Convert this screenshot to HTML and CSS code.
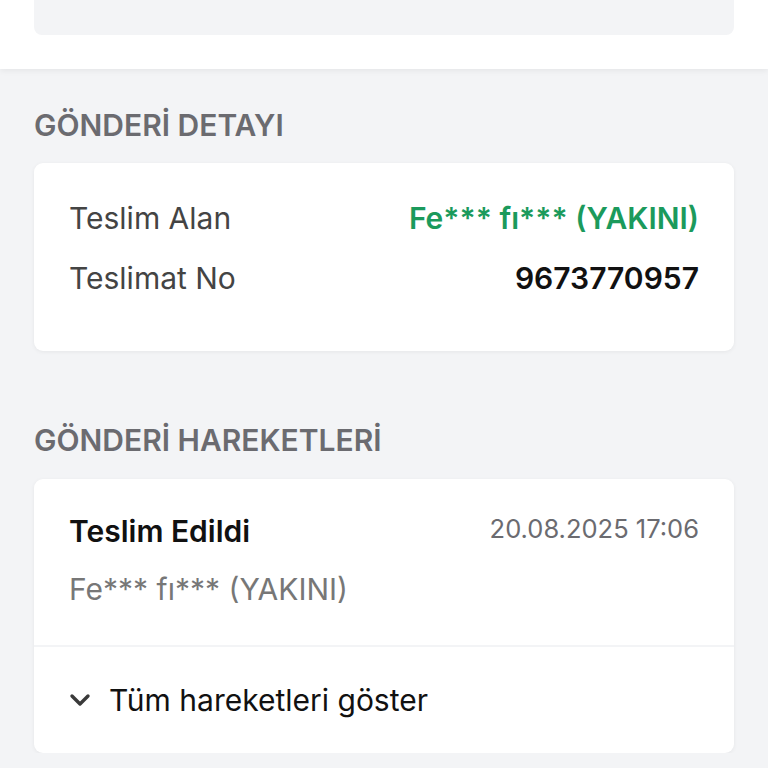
FILE: index.html
```html
<!DOCTYPE html>
<html lang="tr">
<head>
  <meta charset="UTF-8">
  <meta name="viewport" content="width=device-width, initial-scale=1.0">
  <title>Gönderi Takip</title>
  <link rel="stylesheet" href="styles.css">
</head>
<body>
  <div class="ust">
    <div class="ust-kutu"></div>
  </div>

  <h2 class="baslik baslik-detay">GÖNDERİ DETAYI</h2>
  <div class="kart detay">
    <div class="satir">
      <span class="etiket">Teslim Alan</span>
      <span class="deger yesil">Fe*** fı*** (YAKINI)</span>
    </div>
    <div class="satir">
      <span class="etiket">Teslimat No</span>
      <span class="deger">9673770957</span>
    </div>
  </div>

  <h2 class="baslik baslik-hareket">GÖNDERİ HAREKETLERİ</h2>
  <div class="kart hareket">
    <div class="hareket-ust">
      <div class="satir">
        <span class="durum">Teslim Edildi</span>
        <span class="tarih">20.08.2025 17:06</span>
      </div>
      <div class="alici">Fe*** fı*** (YAKINI)</div>
    </div>
    <div class="hareket-alt">
      <svg class="ok" width="22" height="14" viewBox="0 0 22 14">
        <path d="M3 3 L11 11 L19 3" fill="none" stroke="#3a3a3a" stroke-width="3.4" stroke-linecap="round" stroke-linejoin="round"/>
      </svg>
      <span>Tüm hareketleri göster</span>
    </div>
  </div>
</body>
</html>
```

FILE: styles.css
```css
body {
  margin: 0;
  background-color: #f3f4f6;
  font-family: Inter, "Noto Sans", sans-serif;
  color: #111;
}
.ust {
  background-color: white;
  height: 69px;
  padding: 0 34px;
  box-shadow: 0 2px 6px rgba(0,0,0,0.06);
}
.ust-kutu {
  height: 35px;
  background-color: #f3f4f6;
  border-radius: 0 0 8px 8px;
}
.baslik {
  margin: 0 34px;
  font-size: 30px;
  font-weight: 600;
  color: #6b6b70;
  line-height: 36px;
}
.baslik-detay {
  padding-top: 38px;
  margin-bottom: 20px;
}
.baslik-hareket {
  padding-top: 71px;
  margin-bottom: 21px;
}
.kart {
  margin: 0 34px;
  background-color: white;
  border-radius: 9px;
  box-shadow: 0 1px 4px rgba(0,0,0,0.06);
}
.detay {
  padding: 35px 35px 53px;
}
.satir {
  display: flex;
  justify-content: space-between;
  align-items: center;
  height: 40px;
}
.detay .satir + .satir {
  margin-top: 20px;
}
.etiket {
  font-size: 30px;
  color: #444;
}
.deger {
  font-size: 30px;
  font-weight: 600;
  color: #111;
}
.yesil {
  color: #1b9a5c;
}
.hareket-ust {
  padding: 32px 35px 36px;
  border-bottom: 2px solid #f3f4f6;
}
.durum {
  font-size: 30px;
  font-weight: 600;
  color: #111;
}
.tarih {
  font-size: 25.5px;
  color: #6b6b70;
  align-self: flex-start;
  padding-top: 2px;
}
.alici {
  margin-top: 18px;
  font-size: 30px;
  color: #777;
  line-height: 40px;
}
.hareket-alt {
  display: flex;
  align-items: center;
  gap: 18px;
  padding: 0 35px;
  height: 106px;
  font-size: 30px;
  color: #111;
}
```
